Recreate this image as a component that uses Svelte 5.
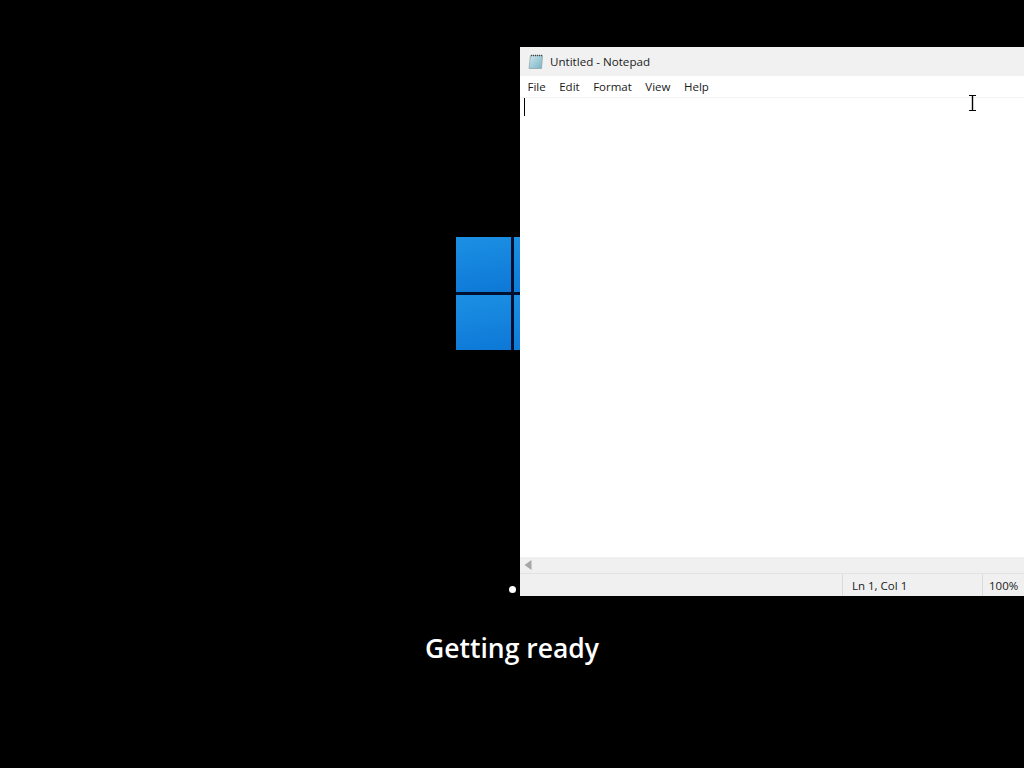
<script>
  const menus = ["File", "Edit", "Format", "View", "Help"];
</script>

<main class="screen">
  <div class="logo">
    <span></span><span></span><span></span><span></span>
  </div>

  <div class="dot"></div>
  <h1 class="status-text">Getting ready</h1>

  <section class="notepad">
    <header class="titlebar">
      <svg class="app-icon" width="16" height="16" viewBox="0 0 16 16">
        <defs>
          <linearGradient id="page" x1="0" y1="0" x2="1" y2="1">
            <stop offset="0" stop-color="#cfe8ee" />
            <stop offset="1" stop-color="#74b3c4" />
          </linearGradient>
        </defs>
        <path d="M2.500 1.500h12l-1 13h-12.500z" fill="url(#page)" stroke="#93a5ac" stroke-width="0.8" />
        <path d="M3 1.500h11" stroke="#444" stroke-width="1.400" stroke-dasharray="1 1" />
      </svg>
      <span>Untitled - Notepad</span>
    </header>

    <nav class="menubar">
      {#each menus as item}
        <span class="menu-item">{item}</span>
      {/each}
    </nav>

    <div class="editor">
      <div class="caret"></div>
      <svg class="ibeam" width="7" height="16" viewBox="0 0 7 16">
        <path d="M0 0.500h7M0 15.500h7" fill="none" stroke="#000" stroke-width="1" />
        <path d="M3.500 0.500v15" fill="none" stroke="#000" stroke-width="1.400" />
      </svg>
    </div>

    <div class="hscroll">
      <svg width="8" height="10" viewBox="0 0 8 10"><path d="M7.500 0v10L0.500 5z" fill="#a6a6a6" /></svg>
    </div>

    <footer class="statusbar">
      <span class="cell pos">Ln 1, Col 1</span>
      <span class="cell zoom">100%</span>
    </footer>
  </section>
</main>

<style>
  :global(body) {
    background: #000;
  }

  .screen {
    position: relative;
    width: 1024px;
    height: 768px;
    overflow: hidden;
    background: #000;
    font-family: "Open Sans", "Noto Sans", sans-serif;
  }

  .logo {
    position: absolute;
    left: 456px;
    top: 237px;
    display: grid;
    grid-template-columns: 55px 55px;
    grid-template-rows: 55px 55px;
    gap: 3px;
    background: #00102e;
  }

  .logo span {
    background: linear-gradient(170deg, #1c90e3, #0d78d7);
  }

  .dot {
    position: absolute;
    left: 509px;
    top: 586px;
    width: 7px;
    height: 7px;
    border-radius: 50%;
    background: #fff;
  }

  .status-text {
    position: absolute;
    left: 0;
    right: 0;
    top: 629px;
    margin: 0;
    text-align: center;
    color: #fff;
    font-size: 26.500px;
    font-weight: 600;
    line-height: 38px;
  }

  .notepad {
    position: absolute;
    left: 520px;
    top: 47px;
    width: 504px;
    height: 549px;
    display: flex;
    flex-direction: column;
    background: #fff;
    font-size: 11.500px;
    color: #1a1a1a;
  }

  .titlebar {
    height: 29px;
    display: flex;
    align-items: center;
    gap: 6px;
    padding-left: 8px;
    background: #f1f1f1;
    font-size: 11.600px;
    color: #222;
  }

  .menubar {
    height: 21px;
    display: flex;
    align-items: center;
    gap: 13.500px;
    padding-left: 7.500px;
    background: #fff;
    border-bottom: 1px solid #f3f3f3;
  }

  .editor {
    position: relative;
    flex: 1;
    background: #fff;
  }

  .caret {
    position: absolute;
    left: 4px;
    top: 0;
    width: 1px;
    height: 18px;
    background: #000;
  }

  .ibeam {
    position: absolute;
    left: 449px;
    top: -3px;
  }

  .hscroll {
    height: 16px;
    display: flex;
    align-items: center;
    padding-left: 4px;
    background: #f0f0f0;
  }

  .statusbar {
    height: 23px;
    display: flex;
    justify-content: flex-end;
    align-items: center;
    background: #f0f0f0;
    border-top: 1px solid #e2e2e2;
    box-sizing: border-box;
  }

  .cell {
    height: 100%;
    display: flex;
    align-items: center;
    border-left: 1px solid #dcdcdc;
    box-sizing: border-box;
  }

  .pos {
    width: 140px;
    padding-left: 9px;
  }

  .zoom {
    width: 42px;
    padding-left: 6px;
  }
</style>
